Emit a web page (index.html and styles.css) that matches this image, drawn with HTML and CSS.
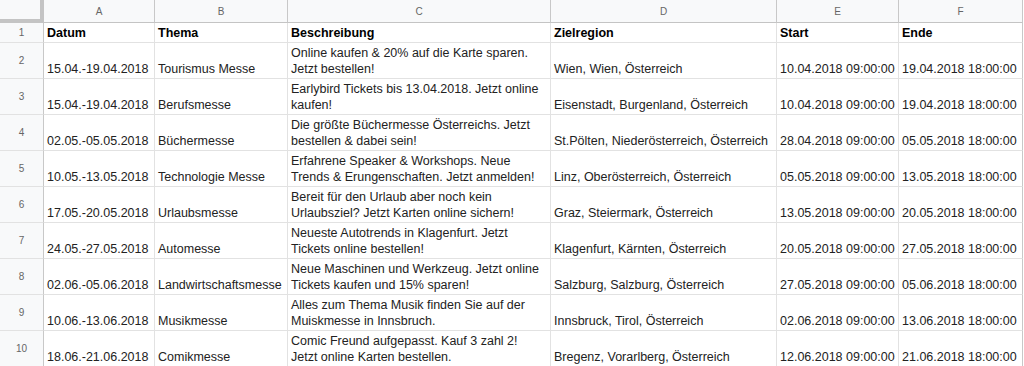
FILE: index.html
```html
<!DOCTYPE html>
<html lang="de">
<head>
<meta charset="utf-8">
<title>Messen</title>
<link rel="stylesheet" href="styles.css">
</head>
<body>
<table class="sheet">
  <colgroup>
    <col class="c-rh"><col class="c-a"><col class="c-b"><col class="c-c"><col class="c-d"><col class="c-e"><col class="c-f">
  </colgroup>
  <tr class="colhdr">
    <th class="corner"></th><th>A</th><th>B</th><th>C</th><th>D</th><th>E</th><th>F</th>
  </tr>
  <tr class="r1">
    <th class="rh">1</th><td class="b">Datum</td><td class="b">Thema</td><td class="b">Beschreibung</td><td class="b">Zielregion</td><td class="b">Start</td><td class="b">Ende</td>
  </tr>
  <tr class="r">
    <th class="rh">2</th><td>15.04.-19.04.2018</td><td>Tourismus Messe</td><td>Online kaufen &amp; 20% auf die Karte sparen.<br>Jetzt bestellen!</td><td>Wien, Wien, Österreich</td><td>10.04.2018 09:00:00</td><td>19.04.2018 18:00:00</td>
  </tr>
  <tr class="r">
    <th class="rh">3</th><td>15.04.-19.04.2018</td><td>Berufsmesse</td><td>Earlybird Tickets bis 13.04.2018. Jetzt online<br>kaufen!</td><td>Eisenstadt, Burgenland, Österreich</td><td>10.04.2018 09:00:00</td><td>19.04.2018 18:00:00</td>
  </tr>
  <tr class="r">
    <th class="rh">4</th><td>02.05.-05.05.2018</td><td>Büchermesse</td><td>Die größte Büchermesse Österreichs. Jetzt<br>bestellen &amp; dabei sein!</td><td>St.Pölten, Niederösterreich, Österreich</td><td>28.04.2018 09:00:00</td><td>05.05.2018 18:00:00</td>
  </tr>
  <tr class="r">
    <th class="rh">5</th><td>10.05.-13.05.2018</td><td>Technologie Messe</td><td>Erfahrene Speaker &amp; Workshops. Neue<br>Trends &amp; Erungenschaften. Jetzt anmelden!</td><td>Linz, Oberösterreich, Österreich</td><td>05.05.2018 09:00:00</td><td>13.05.2018 18:00:00</td>
  </tr>
  <tr class="r">
    <th class="rh">6</th><td>17.05.-20.05.2018</td><td>Urlaubsmesse</td><td>Bereit für den Urlaub aber noch kein<br>Urlaubsziel? Jetzt Karten online sichern!</td><td>Graz, Steiermark, Österreich</td><td>13.05.2018 09:00:00</td><td>20.05.2018 18:00:00</td>
  </tr>
  <tr class="r">
    <th class="rh">7</th><td>24.05.-27.05.2018</td><td>Automesse</td><td>Neueste Autotrends in Klagenfurt. Jetzt<br>Tickets online bestellen!</td><td>Klagenfurt, Kärnten, Österreich</td><td>20.05.2018 09:00:00</td><td>27.05.2018 18:00:00</td>
  </tr>
  <tr class="r">
    <th class="rh">8</th><td>02.06.-05.06.2018</td><td>Landwirtschaftsmesse</td><td>Neue Maschinen und Werkzeug. Jetzt online<br>Tickets kaufen und 15% sparen!</td><td>Salzburg, Salzburg, Österreich</td><td>27.05.2018 09:00:00</td><td>05.06.2018 18:00:00</td>
  </tr>
  <tr class="r">
    <th class="rh">9</th><td>10.06.-13.06.2018</td><td>Musikmesse</td><td>Alles zum Thema Musik finden Sie auf der<br>Muiskmesse in Innsbruch.</td><td>Innsbruck, Tirol, Österreich</td><td>02.06.2018 09:00:00</td><td>13.06.2018 18:00:00</td>
  </tr>
  <tr class="r">
    <th class="rh">10</th><td>18.06.-21.06.2018</td><td>Comikmesse</td><td>Comic Freund aufgepasst. Kauf 3 zahl 2!<br>Jetzt online Karten bestellen.</td><td>Bregenz, Vorarlberg, Österreich</td><td>12.06.2018 09:00:00</td><td>21.06.2018 18:00:00</td>
  </tr>
</table>
</body>
</html>
```

FILE: styles.css
```css
html, body {
  margin: 0;
  padding: 0;
  background: #ffffff;
  overflow: hidden;
}

.sheet {
  border-collapse: separate;
  border-spacing: 0;
  table-layout: fixed;
  width: 1023px;
  font-family: "Liberation Sans", Arial, sans-serif;
  font-size: 12.5px;
  color: #222222;
}

.c-rh { width: 44px; }
.c-a { width: 111px; }
.c-b { width: 133px; }
.c-c { width: 263px; }
.c-d { width: 226px; }
.c-e { width: 122px; }
.c-f { width: 124px; }

.sheet th,
.sheet td {
  padding: 0;
  border-right: 1px solid #e2e2e2;
  border-bottom: 1px solid #e2e2e2;
  white-space: nowrap;
  overflow: hidden;
}

.colhdr { height: 23px; }
.colhdr th {
  background: #f8f9fa;
  color: #666666;
  font-weight: normal;
  font-size: 10px;
  text-align: center;
  vertical-align: middle;
  border-right: 1px solid #c8c8c8;
  border-bottom: 1px solid #c4c4c4;
}
.colhdr th:last-child { border-right-color: #c8c8c8; }

.colhdr .corner {
  border-right: 4px solid #c4c4c4;
  border-bottom: 4px solid #c4c4c4;
}

.rh {
  background: #f8f9fa;
  color: #666666;
  font-weight: normal;
  font-size: 10px;
  text-align: center;
  vertical-align: middle;
  border-right-color: #c8c8c8 !important;
}

.r1 { height: 20px; }
.r { height: 36px; }

.sheet td {
  padding: 0 3px 1px 3px;
  vertical-align: bottom;
  line-height: 16px;
}

.sheet td:last-child { border-right-color: #c8c8c8; }

.sheet td.b {
  font-weight: bold;
  color: #000000;
  vertical-align: middle;
  padding-bottom: 0;
}
```
